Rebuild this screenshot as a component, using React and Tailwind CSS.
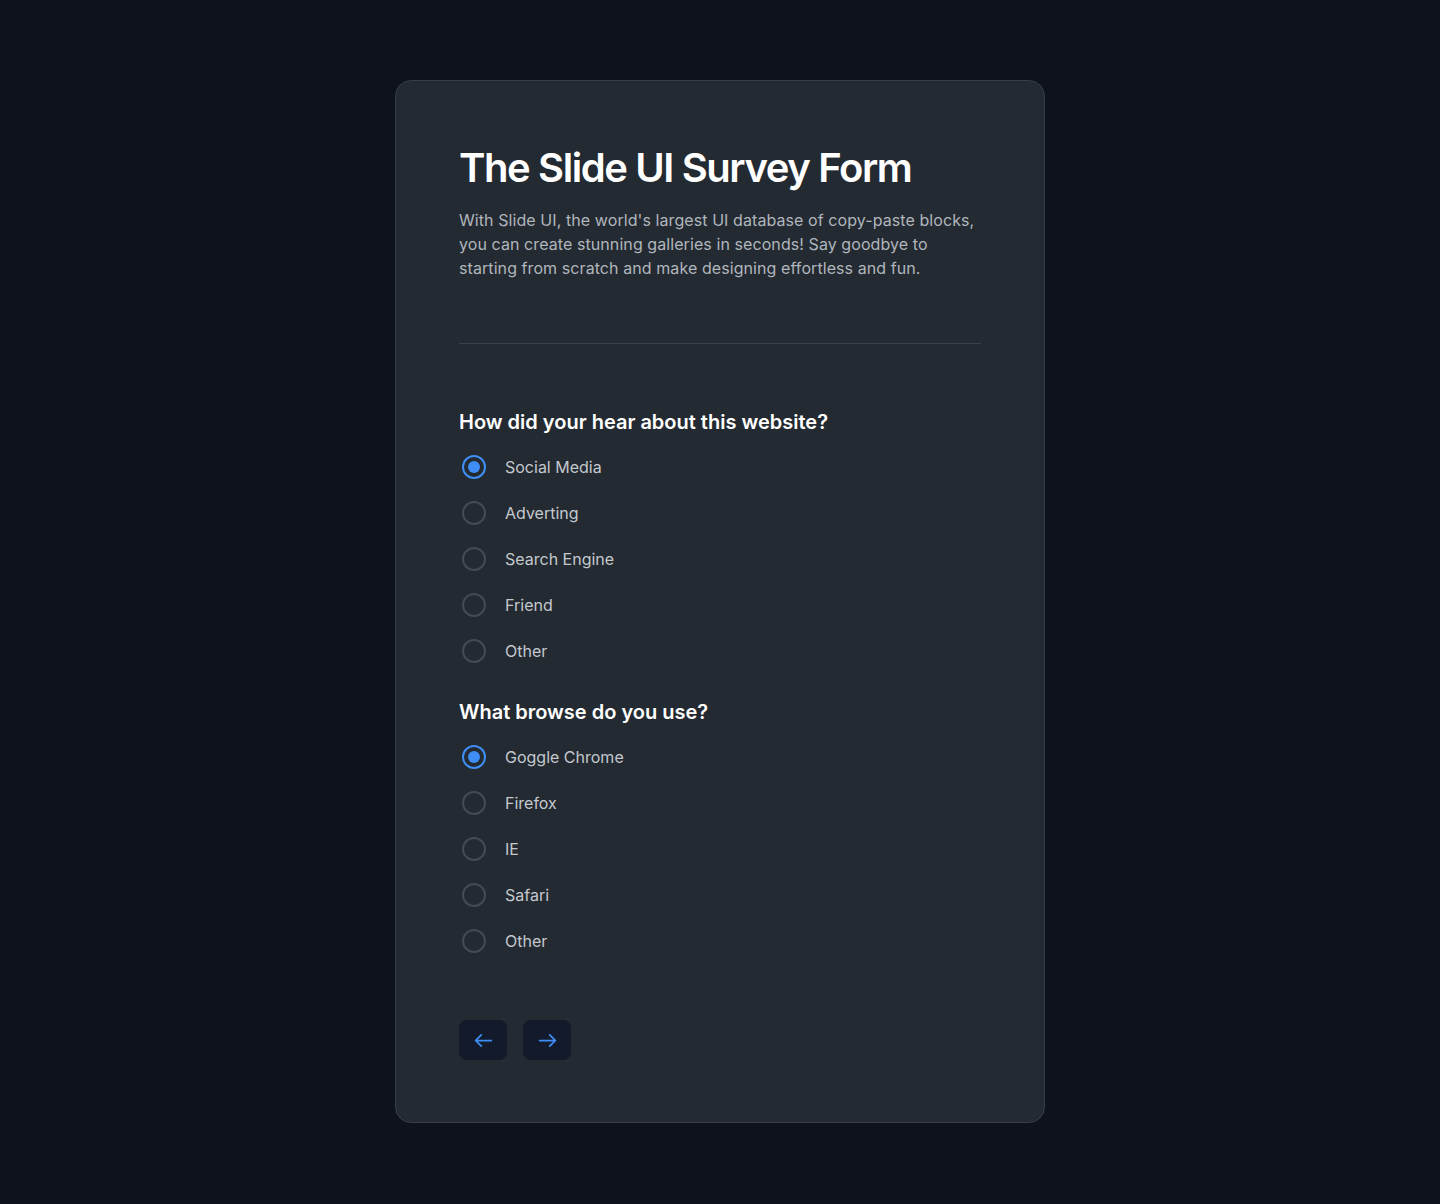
import React from "react";

const Radio = ({ label, checked }) => (
  <label className="flex items-center h-6 gap-[19px] pl-[3px]">
    {checked ? (
      <span className="w-6 h-6 rounded-full border-2 border-[#3f8ef5] flex items-center justify-center">
        <span className="w-3 h-3 rounded-full bg-[#3f8ef5]" />
      </span>
    ) : (
      <span className="w-6 h-6 rounded-full border-2 border-[#454b53]" />
    )}
    <span className="text-base text-[#c3c8ce] leading-6">{label}</span>
  </label>
);

const Group = ({ title, items, className = "" }) => (
  <div className={className}>
    <h2 className="text-[20px] leading-7 font-semibold text-white">{title}</h2>
    <div className="mt-[19px] flex flex-col gap-[22px]">
      {items.map((it, i) => (
        <Radio key={it} label={it} checked={i === 0} />
      ))}
    </div>
  </div>
);

const Arrow = ({ dir }) => (
  <svg
    width="21"
    height="21"
    viewBox="0 0 24 24"
    fill="none"
    stroke="currentColor"
    strokeWidth="2"
    strokeLinecap="round"
    strokeLinejoin="round"
    className={dir === "right" ? "rotate-180" : ""}
  >
    <path d="M3 12h18M9.5 5.5 3 12l6.5 6.5" />
  </svg>
);

export default function App() {
  return (
    <div
      className="min-h-[1204px] bg-[#0d121b] flex justify-center pt-20"
      style={{ fontFamily: "Inter, 'Noto Sans', sans-serif" }}
    >
      <div className="w-[650px] h-[1043px] rounded-2xl border border-[#383e46] bg-[#242a31] px-[63px] pt-[63px]">
        <h1 className="text-[40px] leading-[48px] font-semibold text-white tracking-[-0.035em]">
          The Slide UI Survey Form
        </h1>
        <p className="mt-4 text-base leading-6 text-[#b0b6bd] tracking-[0.005em]">
          With Slide UI, the world's largest UI database of copy-paste blocks, you can create stunning galleries in seconds! Say goodbye to starting from scratch and make designing effortless and fun.
        </p>
        <div className="mt-[63px] h-px bg-[#3a4048]" />
        <Group
          className="mt-16"
          title="How did your hear about this website?"
          items={["Social Media", "Adverting", "Search Engine", "Friend", "Other"]}
        />
        <Group
          className="mt-[35px]"
          title="What browse do you use?"
          items={["Goggle Chrome", "Firefox", "IE", "Safari", "Other"]}
        />
        <div className="mt-[67px] flex gap-4">
          <button className="w-12 h-10 rounded-lg bg-[#131a2b] flex items-center justify-center text-[#3f8ef5]">
            <Arrow dir="left" />
          </button>
          <button className="w-12 h-10 rounded-lg bg-[#131a2b] flex items-center justify-center text-[#3f8ef5]">
            <Arrow dir="right" />
          </button>
        </div>
      </div>
    </div>
  );
}
